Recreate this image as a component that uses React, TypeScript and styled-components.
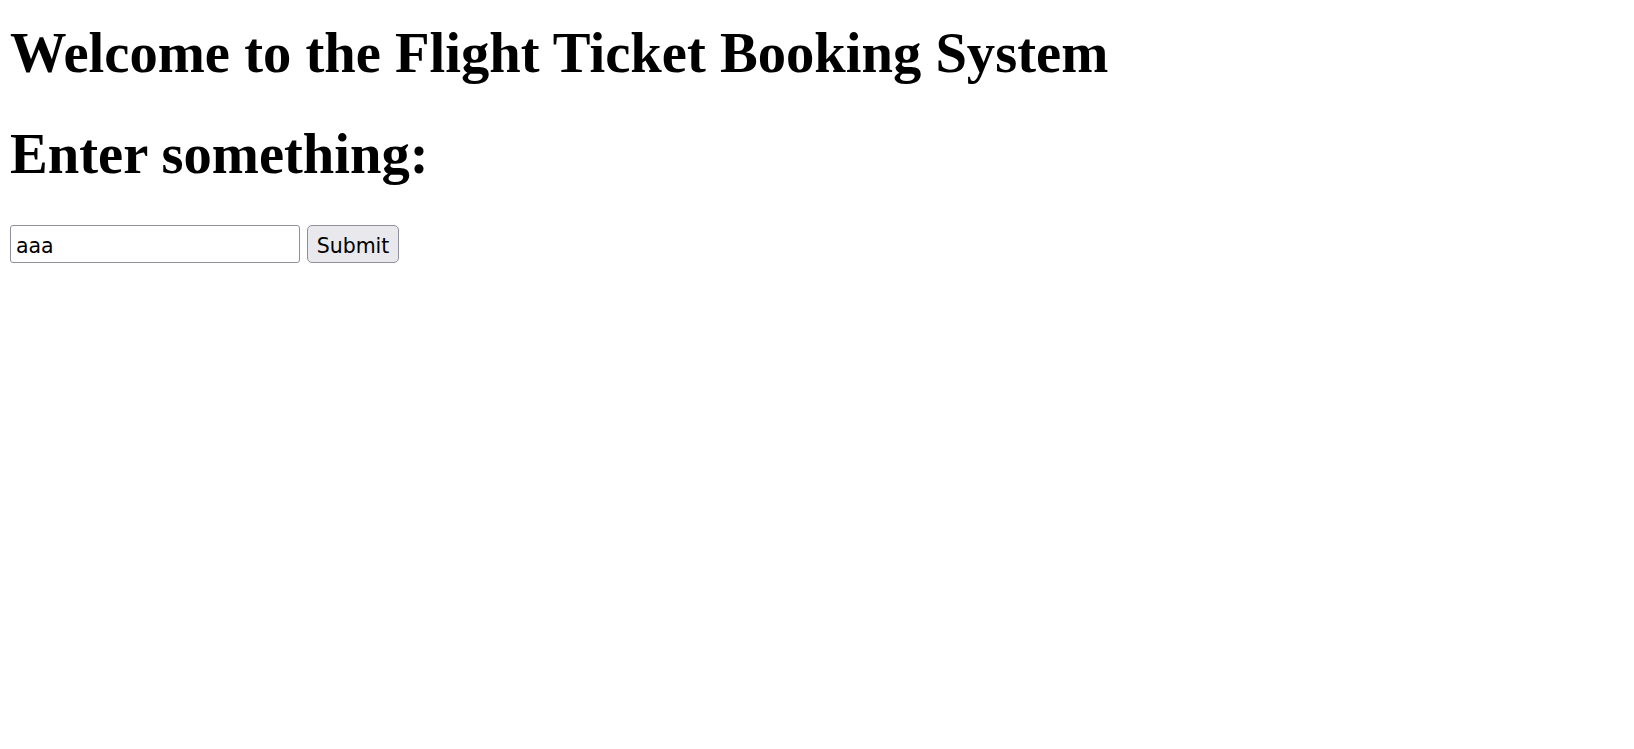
import React, { useState } from 'react'
import styled, { createGlobalStyle } from 'styled-components'

const GlobalStyle = createGlobalStyle`
  body {
    margin: 10px;
    background: #fff;
    color: #000;
    font-family: "Liberation Serif", "Times New Roman", serif;
  }
`

const Heading = styled.h1`
  font-size: 56.6px;
  font-weight: bold;
  line-height: 64px;
  margin: ${(props: { $top: number; $gap: number }) => `${props.$top}px 0 ${props.$gap}px`};
`

const Form = styled.form`
  display: flex;
  align-items: center;
  gap: 7px;
`

const Input = styled.input`
  width: 290px;
  height: 38px;
  box-sizing: border-box;
  padding: 4px 5px 0;
  font-family: "DejaVu Sans", Tahoma, Verdana, sans-serif;
  font-size: 20.5px;
  color: #000;
  border: 1px solid #8f8f9d;
  border-radius: 3px;
  background: #fff;
  outline: none;
`

const Button = styled.button`
  width: 92px;
  height: 38px;
  box-sizing: border-box;
  padding: 4px 0 0;
  font-family: "DejaVu Sans", Tahoma, Verdana, sans-serif;
  font-size: 20.5px;
  color: #000;
  border: 1px solid #8f8f9d;
  border-radius: 5px;
  background: #e9e9ed;
`

export default function App() {
  const [value, setValue] = useState('aaa')
  return (
    <>
      <GlobalStyle />
      <Heading $top={11} $gap={37}>
        Welcome to the Flight Ticket Booking System
      </Heading>
      <Heading as="h2" $top={37} $gap={39}>
        Enter something:
      </Heading>
      <Form onSubmit={(e) => e.preventDefault()}>
        <Input value={value} onChange={(e) => setValue(e.target.value)} />
        <Button type="submit">Submit</Button>
      </Form>
    </>
  )
}
